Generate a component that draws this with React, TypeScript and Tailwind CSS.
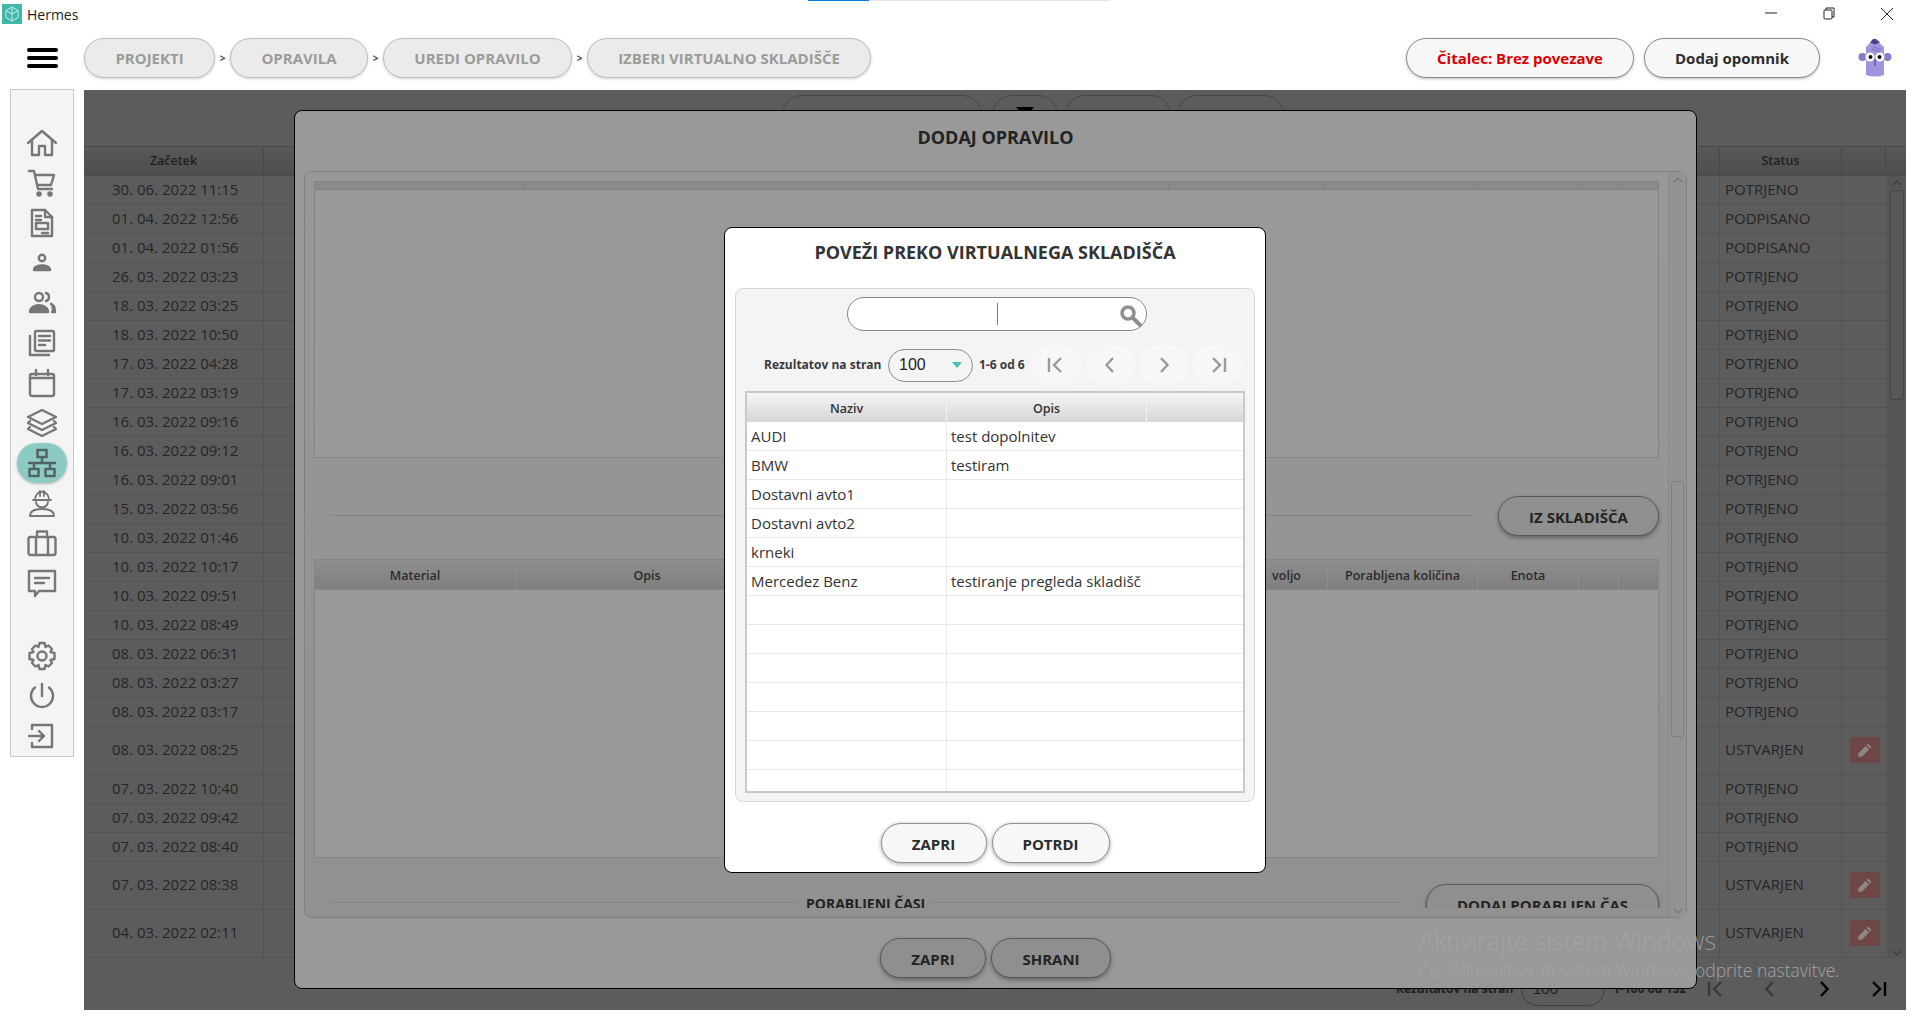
import React from "react";

const S = ({ children, w = 30, h = 30 }: { children: React.ReactNode; w?: number; h?: number }) => (
  <svg width={w} height={h} viewBox="0 0 30 30" fill="none" stroke="#777777" strokeWidth={2.4} strokeLinecap="round" strokeLinejoin="round">
    {children}
  </svg>
);

const icons: React.ReactNode[] = [
  <S><path d="M1 15 15 3l14 12" /><path d="M5 12v15h7v-9h6v9h7V12" /></S>,
  <S><path d="M2 3h5l4 18h14" /><path d="M8 7h19l-3 10H10.5" /><circle cx="12" cy="26" r="1.6" fill="#777777" /><circle cx="23" cy="26" r="1.6" fill="#777777" /></S>,
  <S><path d="M5 2h13l7 7v19H5z" /><path d="M18 2v7h7" /><path d="M9 8h5M9 12h5" /><rect x="9" y="15" width="12" height="6" /><path d="M15 25h6" /></S>,
  <S><circle cx="15" cy="10" r="3.2" /><path d="M7 22c0-6 16-6 16 0z" fill="#777777" /></S>,
  <S><circle cx="12" cy="9" r="4" /><path d="M3 24c0-9 18-9 18 0z" fill="#777777" /><path d="M19 5c4 1 4 7 0 8" /><path d="M24 16c3 1 4 4 4 8h-3" fill="#777777" /></S>,
  <S><rect x="8" y="3" width="19" height="20" rx="1.5" /><path d="M3 8v19h19" /><path d="M12 8h11M12 12.500h11M12 17h6" /></S>,
  <S><rect x="3" y="6" width="24" height="22" rx="2" /><path d="M3 10h24M9 2v5M21 2v5" /></S>,
  <S><path d="M15 2 29 9 15 16 1 9z" /><path d="M3 13l-2 2 14 7 14-7-2-2" /><path d="M3 19l-2 2 14 7 14-7-2-2" /></S>,
  <svg width="30" height="30" viewBox="0 0 30 30" fill="none" stroke="#4d6461" strokeWidth={2.4}><rect x="10.500" y="2" width="9" height="7" /><path d="M15 9v6M1 15h28M7 15v6M23 15v6" /><rect x="2.500" y="21" width="9" height="7" /><rect x="18.500" y="21" width="9" height="7" /></svg>,
  <svg width="30" height="30" viewBox="0 0 30 30" fill="none" stroke="#777777" strokeWidth={1.8} strokeLinecap="round" strokeLinejoin="round"><path d="M8 12c0-11 14-11 14 0" /><path d="M6 12h18M13 3v5M17 3v5" /><path d="M9 14c1 7 11 7 12 0" /><path d="M3 28c0-6 6-7 12-7s12 1 12 7z" /></svg>,
  <S><rect x="1.500" y="9" width="27" height="18" rx="2" /><path d="M10 9V3.500h10V9M9 9v18M21 9v18" /></S>,
  <S><path d="M2 3h26v20H12l-4 5v-5H2z" /><path d="M8 10h14M8 15h9" /></S>,
];
const iconsBottom: React.ReactNode[] = [
  <S><path d="M12.500 2h5l1 4 3-1.500 3.500 3.500L23.500 11l4 1v6l-4 1 1.500 3-3.500 3.500-3-1.500-1 4h-5l-1-4-3 1.500L5 22l1.500-3-4-1v-6l4-1L5 8l3.500-3.500 3 1.500z" /><circle cx="15" cy="15" r="4.500" /></S>,
  <S><path d="M15 3v12" /><path d="M8 6.500a11 11 0 1 0 14 0" /></S>,
  <S><path d="M5 8V4h20v22H5v-4" /><path d="M2 15h15M12 10l5 5-5 5" /></S>,
];

const rows: [string, string, number, boolean][] = [
  ["30. 06. 2022 11:15", "POTRJENO", 29, false],
  ["01. 04. 2022 12:56", "PODPISANO", 29, false],
  ["01. 04. 2022 01:56", "PODPISANO", 29, false],
  ["26. 03. 2022 03:23", "POTRJENO", 29, false],
  ["18. 03. 2022 03:25", "POTRJENO", 29, false],
  ["18. 03. 2022 10:50", "POTRJENO", 29, false],
  ["17. 03. 2022 04:28", "POTRJENO", 29, false],
  ["17. 03. 2022 03:19", "POTRJENO", 29, false],
  ["16. 03. 2022 09:16", "POTRJENO", 29, false],
  ["16. 03. 2022 09:12", "POTRJENO", 29, false],
  ["16. 03. 2022 09:01", "POTRJENO", 29, false],
  ["15. 03. 2022 03:56", "POTRJENO", 29, false],
  ["10. 03. 2022 01:46", "POTRJENO", 29, false],
  ["10. 03. 2022 10:17", "POTRJENO", 29, false],
  ["10. 03. 2022 09:51", "POTRJENO", 29, false],
  ["10. 03. 2022 08:49", "POTRJENO", 29, false],
  ["08. 03. 2022 06:31", "POTRJENO", 29, false],
  ["08. 03. 2022 03:27", "POTRJENO", 29, false],
  ["08. 03. 2022 03:17", "POTRJENO", 29, false],
  ["08. 03. 2022 08:25", "USTVARJEN", 48, true],
  ["07. 03. 2022 10:40", "POTRJENO", 29, false],
  ["07. 03. 2022 09:42", "POTRJENO", 29, false],
  ["07. 03. 2022 08:40", "POTRJENO", 29, false],
  ["07. 03. 2022 08:38", "USTVARJEN", 48, true],
  ["04. 03. 2022 02:11", "USTVARJEN", 48, true],
];

const dialogRows: [string, string][] = [
  ["AUDI", "test dopolnitev"],
  ["BMW", "testiram"],
  ["Dostavni avto1", ""],
  ["Dostavni avto2", ""],
  ["krneki", ""],
  ["Mercedez Benz", "testiranje pregleda skladišč"],
  ["", ""], ["", ""], ["", ""], ["", ""], ["", ""], ["", ""], ["", ""],
];

const Crumb = ({ label, w }: { label: string; w: string }) => (
  <div className={`${w} h-[40px] flex items-center justify-center rounded-[20px] border border-[#bdbdbd] bg-[#ebebeb] shadow-[0_1px_3px_rgba(0,0,0,0.18)] text-[15px] font-bold text-[#9b9b9b]`}>{label}</div>
);
const Sep = () => <div className="w-[15px] text-center text-[10px] font-bold text-[#444444] leading-none">&gt;</div>;

const First = ({ c }: { c: string }) => (
  <svg width="20" height="18" viewBox="0 0 20 18" fill="none" stroke={c} strokeWidth={2.4}><path d="M3 2v14M15 2 8 9l7 7" /></svg>
);
const Prev = ({ c }: { c: string }) => (
  <svg width="12" height="18" viewBox="0 0 12 18" fill="none" stroke={c} strokeWidth={2.4}><path d="M9 2 2.500 9 9 16" /></svg>
);
const Next = ({ c }: { c: string }) => (
  <svg width="12" height="18" viewBox="0 0 12 18" fill="none" stroke={c} strokeWidth={2.4}><path d="M3 2l6.500 7L3 16" /></svg>
);
const Last = ({ c }: { c: string }) => (
  <svg width="20" height="18" viewBox="0 0 20 18" fill="none" stroke={c} strokeWidth={2.4}><path d="M17 2v14M5 2l7 7-7 7" /></svg>
);

const Pen = () => (
  <svg width="16" height="16" viewBox="0 0 16 16" fill="#8f8585"><path d="M11 1.500 14.500 5l-1.500 1.500L9.500 3zM8.500 4 12 7.500 5 14.500 1 15l.5-4z" /></svg>
);

const DarkPill = ({ label, w }: { label: string; w: string }) => (
  <div className={`${w} h-[40px] shrink-0 pt-[2px] flex items-center justify-center rounded-[20px] border border-[#5a5a5a] bg-[#8f8f8f] shadow-[0_2px_4px_rgba(0,0,0,0.35)] text-[15px] font-bold text-[#232323] whitespace-nowrap`}>{label}</div>
);
const LightPill = ({ label, w }: { label: string; w: string }) => (
  <div className={`${w} h-[40px] pt-[2px] flex items-center justify-center rounded-[20px] border border-[#909090] bg-[#f7f7f7] shadow-[0_1px_4px_rgba(0,0,0,0.35)] text-[15px] font-bold text-[#2c2c2c]`}>{label}</div>
);

const HCell = ({ w, label }: { w: string; label?: string }) => (
  <div className={`${w} h-full shrink-0 pt-[3px] flex items-center justify-center border-r border-[#8e8e8e] text-[12.500px] font-semibold text-[#2b2b2b]`}>{label}</div>
);

export default function App() {
  return (
    <div className="relative w-[1920px] h-[1021px] overflow-hidden bg-white font-['Open_Sans',sans-serif]">
      {/* loading strip */}
      <div className="absolute top-0 left-[808px] flex h-px">
        <div className="w-[61px] bg-[#0078d7]" />
        <div className="w-[241px] bg-[#e6e6e6]" />
      </div>

      {/* Title bar */}
      <div className="h-[38px] flex items-start">
        <div className="ml-[2px] mt-[4px] w-[20px] h-[20px] bg-[#3fb8a9] flex items-center justify-center">
          <svg width="14" height="16" viewBox="0 0 14 16" fill="none" stroke="#d5f2ee" strokeWidth={0.9}><path d="M7 1 13 4.500v7L7 15l-6-3.500v-7zM7 1v14M1 4.500 7 8l6-3.500" /></svg>
        </div>
        <div className="ml-[5px] mt-[4px] text-[14px] leading-[22px] text-[#222222]">Hermes</div>
        <div className="ml-auto mr-[4px] flex">
          <div className="w-[58px] h-[26px] flex items-center justify-center">
            <svg width="12" height="2"><path d="M0 1h12" stroke="#222222" /></svg>
          </div>
          <div className="w-[58px] h-[26px] flex items-center justify-center">
            <svg width="12" height="13" viewBox="0 0 12 13" fill="none" stroke="#222222"><path d="M3 3V1h8v9H9" /><rect x="1" y="3" width="8" height="9" rx="1" /></svg>
          </div>
          <div className="w-[58px] h-[28px] flex items-center justify-center">
            <svg width="14" height="14" viewBox="0 0 14 14" fill="none" stroke="#222222"><path d="M1 1l12 12M13 1 1 13" /></svg>
          </div>
        </div>
      </div>

      {/* Header */}
      <div className="h-[40px] flex items-center">
        <div className="ml-[27px] w-[31px] h-[20px] flex flex-col justify-between">
          <div className="h-[4px] rounded-full bg-black" />
          <div className="h-[4px] rounded-full bg-black" />
          <div className="h-[4px] rounded-full bg-black" />
        </div>
        <div className="ml-[26px] flex items-center">
          <Crumb label="PROJEKTI" w="w-[131px]" />
          <Sep />
          <Crumb label="OPRAVILA" w="w-[138px]" />
          <Sep />
          <Crumb label="UREDI OPRAVILO" w="w-[189px]" />
          <Sep />
          <Crumb label="IZBERI VIRTUALNO SKLADIŠČE" w="w-[284px]" />
        </div>
        <div className="ml-auto flex items-center">
          <div className="w-[228px] h-[40px] flex items-center justify-center rounded-[20px] border border-[#8c8c8c] bg-[#f7f7f7] shadow-[0_1px_3px_rgba(0,0,0,0.25)] text-[15px] font-bold text-[#dc0000]">Čitalec: Brez povezave</div>
          <div className="ml-[10px] w-[176px] h-[40px] flex items-center justify-center rounded-[20px] border border-[#8c8c8c] bg-[#f7f7f7] shadow-[0_1px_3px_rgba(0,0,0,0.25)] text-[15px] font-bold text-[#2c2c2c]">Dodaj opomnik</div>
          <div className="ml-[37px] mr-[27px] w-[36px] h-[40px] flex items-center justify-center">
            <svg width="34" height="40" viewBox="0 0 34 40">
              <circle cx="4.500" cy="19" r="4" fill="#8a7ccb" />
              <circle cx="29.500" cy="19" r="4" fill="#8a7ccb" />
              <path d="M8 9 14 3h5l7 6v28q-9 3-18 0z" fill="#a095dd" />
              <path d="M12 4.500 15 1h3l4 3.500-5 2z" fill="#4e3f95" />
              <path d="M14 11l8 3M16 9l7 3" stroke="#7b6dbd" strokeWidth={1} />
              <circle cx="12" cy="19" r="4.500" fill="#ffffff" />
              <circle cx="22" cy="19" r="4.500" fill="#ffffff" />
              <circle cx="12.500" cy="19" r="2" fill="#111111" />
              <circle cx="21.500" cy="19" r="2" fill="#111111" />
              <path d="M17 21v7" stroke="#4e3f95" strokeWidth={1} />
            </svg>
          </div>
        </div>
      </div>

      {/* Main */}
      <div className="mt-[12px] h-[920px] flex items-start">
        <aside className="ml-[10px] -mt-px w-[64px] h-[668px] shrink-0 border border-[#c9c9c9] bg-[#f4f4f4] pt-[33px] flex flex-col items-center">
          {icons.map((ic, i) => (
            <div key={i} className={`w-[50px] h-[40px] flex items-center justify-center rounded-[20px] ${i === 8 ? "bg-[#8ecac4] shadow-[0_1px_3px_rgba(0,0,0,0.25)]" : ""}`}>{ic}</div>
          ))}
          <div className="h-[33px]" />
          {iconsBottom.map((ic, i) => (
            <div key={i} className="w-[50px] h-[40px] flex items-center justify-center">{ic}</div>
          ))}
        </aside>

        <main className="relative ml-[10px] w-[1822px] h-[920px] bg-[#5c5c5c] overflow-hidden flex flex-col">
          {/* background toolbar */}
          <div className="h-[56px] pt-[5px] pl-[698px] flex shrink-0">
            <div className="w-[200px] h-[40px] rounded-[20px] border border-[#464646]" />
            <div className="ml-[10px] w-[66px] h-[40px] rounded-[20px] border border-[#464646] flex justify-center pt-[10px]">
              <svg width="18" height="10"><path d="M0 1h18l-5 6H5z" fill="#000000" /></svg>
            </div>
            <div className="ml-[7px] w-[106px] h-[40px] rounded-[20px] border border-[#464646]" />
            <div className="ml-[6px] w-[107px] h-[40px] rounded-[20px] border border-[#464646]" />
          </div>

          {/* background table */}
          <div className="flex flex-col shrink-0">
            <div className="h-[30px] pt-[1px] flex border-y border-[#4a4a4a] bg-gradient-to-b from-[#585858] to-[#4e4e4e] text-[12.500px] font-semibold text-[#1f1f1f]">
              <div className="w-[180px] flex items-center justify-center border-r border-[#484848]">Začetek</div>
              <div className="w-[1456px] border-r border-[#484848]" />
              <div className="w-[122px] flex items-center justify-center border-r border-[#484848]">Status</div>
              <div className="w-[44px] border-r border-[#484848]" />
              <div className="flex-1" />
            </div>
            <div className="flex">
              <div className="w-[1803px]">
                {rows.map(([d, st, h, pen], i) => (
                  <div key={i} className={`flex border-b border-[#535353] text-[15px] text-[#262626] ${h === 48 ? "h-[48px]" : "h-[29px]"}`}>
                    <div className="w-[180px] pl-[28px] pb-[2px] flex items-center border-r border-[#535353] whitespace-nowrap">{d}</div>
                    <div className="w-[1456px] border-r border-[#535353]" />
                    <div className="w-[122px] pl-[5px] pb-[2px] flex items-center border-r border-[#535353]">{st}</div>
                    <div className="w-[45px] pb-[2px] flex items-center justify-center">
                      {pen && <div className="w-[30px] h-[26px] rounded-[2px] bg-[#6e4646] flex items-center justify-center"><Pen /></div>}
                    </div>
                  </div>
                ))}
              </div>
              <div className="flex-1 bg-[#555555] flex flex-col items-center">
                <svg width="12" height="14" viewBox="0 0 12 14" fill="none" stroke="#3d3d3d" strokeWidth={1.2}><path d="M2 9l4-4 4 4" /></svg>
                <div className="w-[14px] h-[210px] rounded-[3px] border border-[#454545] bg-[#585858]" />
                <div className="mt-auto">
                  <svg width="12" height="10" viewBox="0 0 12 10" fill="none" stroke="#3d3d3d" strokeWidth={1.2}><path d="M2 3l4 4 4-4" /></svg>
                </div>
              </div>
            </div>
          </div>

          {/* background pagination */}
          <div className="flex-1 flex items-center pt-[10px] pl-[1312px] text-[#1f1f1f]">
            <div className="w-[117px] text-[12px] font-bold whitespace-nowrap">Rezultatov na stran</div>
            <div className="ml-[8px] w-[84px] h-[33px] rounded-[17px] border border-[#3f3f3f] pl-[11px] flex items-center text-[15px] font-['Liberation_Sans',sans-serif]">100</div>
            <div className="ml-[8px] w-[72px] text-[12px] font-bold whitespace-nowrap">1-100 od 152</div>
            <div className="w-[62px] flex justify-center ml-[0px]"><First c="#3a3a3a" /></div>
            <div className="w-[54px] flex justify-center -ml-[4px]"><Prev c="#3a3a3a" /></div>
            <div className="w-[54px] flex justify-center"><Next c="#000000" /></div>
            <div className="w-[54px] flex justify-center"><Last c="#000000" /></div>
          </div>

          {/* Modal: Dodaj opravilo */}
          <div className="absolute left-[210px] top-[20px] w-[1403px] h-[879px] rounded-[8px] border border-black bg-[#999999] flex flex-col">
            <div className="h-[60px] shrink-0 flex items-center justify-center pb-[8px] text-[18px] font-bold text-[#222222]">DODAJ OPRAVILO</div>
            <div className="mx-[9px] h-[747px] shrink-0 rounded-[8px] border border-[#808080] bg-gradient-to-b from-[#989898] to-[#919191] flex">
              <div className="w-[1354px] h-[727px] mt-[9px] ml-[9px] overflow-hidden shrink-0">
                <div className="w-[1345px] h-[277px] border border-[#858585] bg-[#999999] shrink-0">
                  <div className="h-[8px] bg-[#8a8a8a] border-b border-[#808080] flex">
                    <div className="w-[209px] border-r border-[#808080]" />
                    <div className="w-[645px] border-r border-[#808080]" />
                    <div className="w-[155px] border-r border-[#808080]" />
                    <div className="w-[154px] border-r border-[#808080]" />
                    <div className="w-[100px] border-r border-[#808080]" />
                    <div className="w-[40px] border-r border-[#808080]" />
                  </div>
                </div>
                <div className="w-[1345px] h-[101px] flex items-start">
                  <div className="mt-[57px] ml-[16px] flex-1 h-px bg-[#858585]" />
                  <div className="ml-[25px] mt-[38px]"><DarkPill label="IZ SKLADIŠČA" w="w-[161px]" /></div>
                </div>
                <div className="w-[1345px] h-[299px] border border-[#858585] bg-[#999999]">
                  <div className="h-[30px] flex bg-gradient-to-b from-[#8e8e8e] to-[#7f7f7f] border-b border-[#868686]">
                    <HCell w="w-[201px]" label="Material" />
                    <HCell w="w-[263px]" label="Opis" />
                    <HCell w="w-[399px]" />
                    <div className="w-[150px] h-full shrink-0 pt-[3px] flex items-center justify-end pr-[26px] border-r border-[#8e8e8e] text-[12.500px] font-semibold text-[#2b2b2b]">voljo</div>
                    <HCell w="w-[150px]" label="Porabljena količina" />
                    <HCell w="w-[101px]" label="Enota" />
                    <HCell w="w-[40px]" />
                  </div>
                </div>
                <div className="mt-[26px] w-[1345px] h-[50px] flex items-start">
                  <div className="mt-[18px] ml-[16px] w-[466px] h-px bg-[#858585]" />
                  <div className="ml-[10px] mt-[9px] w-[117px] text-[14px] font-bold text-[#222222] whitespace-nowrap">PORABLJENI ČASI</div>
                  <div className="ml-[9px] mt-[18px] w-[468px] h-px bg-[#858585]" />
                  <div className="ml-[26px]"><DarkPill label="DODAJ PORABLJEN ČAS" w="w-[233px]" /></div>
                </div>
              </div>
              <div className="flex-1 h-full border-l border-[#8a8a8a] bg-[#939393] flex flex-col items-center">
                <svg className="mt-[3px]" width="12" height="10" viewBox="0 0 12 10" fill="none" stroke="#777777" strokeWidth={1.2}><path d="M2 7l4-4 4 4" /></svg>
                <div className="mt-[296px] w-[13px] h-[256px] rounded-[3px] border border-[#808080] bg-[#939393]" />
                <svg className="mt-[169px]" width="12" height="10" viewBox="0 0 12 10" fill="none" stroke="#777777" strokeWidth={1.2}><path d="M2 3l4 4 4-4" /></svg>
              </div>
            </div>
            <div className="flex justify-center gap-[5px] mt-[20px]">
              <DarkPill label="ZAPRI" w="w-[106px]" />
              <DarkPill label="SHRANI" w="w-[120px]" />
            </div>
          </div>

          {/* Dialog: Povezi preko virtualnega skladisca */}
          <div className="absolute left-[640px] top-[137px] w-[542px] h-[646px] rounded-[8px] border border-black bg-white flex flex-col items-center">
            <div className="h-[60px] w-full shrink-0 flex items-center justify-center pb-[12px] text-[18px] font-bold text-[#333333]">POVEŽI PREKO VIRTUALNEGA SKLADIŠČA</div>
            <div className="w-[520px] h-[514px] shrink-0 rounded-[8px] border border-[#d6d6d6] bg-[#f4f4f4] flex flex-col">
              <div className="mt-[8px] ml-[111px] w-[300px] h-[34px] rounded-[17px] border border-[#888888] bg-white flex items-center">
                <div className="ml-[149px] w-px h-[22px] bg-[#6f6fe8]" />
                <div className="ml-auto mr-[2px] mt-[4px]">
                  <svg width="26" height="26" viewBox="0 0 26 26" fill="none" stroke="#8e8e8e"><circle cx="10" cy="10" r="6" strokeWidth={3.500} /><path d="M15 15l7 7" strokeWidth={4} strokeLinecap="round" /></svg>
                </div>
              </div>
              <div className="mt-[14px] ml-[28px] h-[40px] flex items-center">
                <div className="w-[117px] text-[12px] font-bold text-[#3a3a3a] whitespace-nowrap">Rezultatov na stran</div>
                <div className="ml-[7px] w-[85px] h-[33px] rounded-[17px] border border-[#8c8c8c] flex items-center pl-[10px] pr-[10px] text-[16px] text-[#222222] font-['Liberation_Sans',sans-serif]">
                  100
                  <svg className="ml-auto" width="10" height="7"><path d="M0 0h10L5 6z" fill="#47bfb2" /></svg>
                </div>
                <div className="ml-[6px] w-[52px] text-[12px] font-bold text-[#3a3a3a] whitespace-nowrap">1-6 od 6</div>
                <div className="w-[50px] h-[40px] rounded-[20px] bg-[#f7f7f7] flex items-center justify-center"><First c="#9a9a9a" /></div>
                <div className="ml-[4px] w-[50px] h-[40px] rounded-[20px] bg-[#f7f7f7] flex items-center justify-center"><Prev c="#9a9a9a" /></div>
                <div className="ml-[4px] w-[50px] h-[40px] rounded-[20px] bg-[#f7f7f7] flex items-center justify-center"><Next c="#9a9a9a" /></div>
                <div className="ml-[4px] w-[50px] h-[40px] rounded-[20px] bg-[#f7f7f7] flex items-center justify-center"><Last c="#9a9a9a" /></div>
              </div>
              <div className="mt-[6px] ml-[9px] w-[500px] h-[402px] border-2 border-[#c8c8c8] bg-white overflow-hidden">
                <div className="h-[29px] pt-[3px] flex bg-gradient-to-b from-[#f6f6f6] to-[#d6d6d6] text-[12.500px] font-semibold text-[#333333]">
                  <div className="w-[200px] flex items-center justify-center border-r border-[#f2f2f2]">Naziv</div>
                  <div className="w-[200px] flex items-center justify-center border-r border-[#f2f2f2]">Opis</div>
                  <div className="flex-1" />
                </div>
                {dialogRows.map(([a, b], i) => (
                  <div key={i} className="h-[29px] flex border-b border-[#e9e9e9] text-[15px] text-[#333333] whitespace-nowrap">
                    <div className="w-[200px] pl-[4px] flex items-center border-r border-[#e9e9e9]">{a}</div>
                    <div className="flex-1 pl-[4px] flex items-center">{b}</div>
                  </div>
                ))}
              </div>
            </div>
            <div className="mt-[21px] flex gap-[5px]">
              <LightPill label="ZAPRI" w="w-[106px]" />
              <LightPill label="POTRDI" w="w-[118px]" />
            </div>
          </div>
        </main>
      </div>

      {/* Windows watermark */}
      <div className="absolute left-[1419px] top-[922px] pointer-events-none font-light whitespace-nowrap">
        <div className="text-[25px] leading-[36px] text-[#a6a6a6]/80">Aktivirajte sistem Windows</div>
        <div className="text-[17.500px] leading-[22px] mt-[1px] text-[#a3a3a3]">Če želite aktivirati sistem Windows, odprite nastavitve.</div>
      </div>
    </div>
  );
}
